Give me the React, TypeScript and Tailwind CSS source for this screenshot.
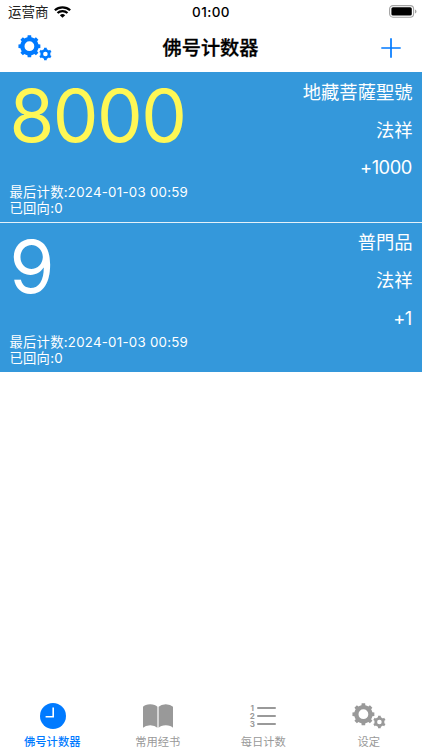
import React from "react";

const point = (cx: number, cy: number, r: number, deg: number) => {
  const a = (deg * Math.PI) / 180;
  return `${(cx + r * Math.sin(a)).toFixed(2)} ${(cy - r * Math.cos(a)).toFixed(2)}`;
};

function gearPath(cx: number, cy: number, outer: number, body: number, hole: number, teeth: number) {
  const step = 360 / teeth;
  const pts: string[] = [];
  for (let i = 0; i < teeth; i++) {
    const a = i * step;
    pts.push(point(cx, cy, body, a - step * 0.27));
    pts.push(point(cx, cy, outer, a - step * 0.2));
    pts.push(point(cx, cy, outer, a + step * 0.2));
    pts.push(point(cx, cy, body, a + step * 0.27));
    pts.push(point(cx, cy, body, a + step * 0.5));
  }
  return `M${pts.join("L")}ZM${cx - hole} ${cy}a${hole} ${hole} 0 1 0 ${hole * 2} 0a${hole} ${hole} 0 1 0 ${-hole * 2} 0Z`;
}

function Gears() {
  return (
    <svg width="34" height="26" viewBox="0 0 34 26" fill="currentColor" fillRule="evenodd">
      <path d={gearPath(11.4, 11.2, 11.1, 9.2, 4.9, 8)} />
      <path d={gearPath(27.4, 19, 6.4, 5, 2.3, 6)} />
    </svg>
  );
}

function Wifi() {
  return (
    <svg width="17" height="12" viewBox="0 0 16 12" fill="none" stroke="#000" strokeWidth="2.1" preserveAspectRatio="none">
      <path d="M.8 4.3a10.3 10.3 0 0 1 14.4 0" />
      <path d="M3.3 7a6.8 6.8 0 0 1 9.4 0" />
      <path d="M5.5 9.2a3.6 3.6 0 0 1 5 0L8 11.8Z" fill="#000" stroke="none" />
    </svg>
  );
}

function Battery() {
  return (
    <svg width="28" height="13" viewBox="0 0 28 13">
      <rect x=".6" y=".6" width="24" height="11.6" rx="3.4" fill="none" stroke="#a3a3a3" strokeWidth="1.1" />
      <rect x="2.4" y="2.2" width="20.4" height="8.4" rx="1.6" fill="#000" />
      <path d="M26 4.4c2 .7 2 3.3 0 4Z" fill="#a3a3a3" />
    </svg>
  );
}

function Clock() {
  return (
    <svg className="ml-[1px]" width="26" height="26" viewBox="0 0 26 26">
      <circle cx="13" cy="13" r="13" fill="currentColor" />
      <path d="M13.2 4.5v9.2H5.6" fill="none" stroke="#fff" strokeWidth="1.6" />
    </svg>
  );
}

function Book() {
  return (
    <svg width="30" height="24" viewBox="0 0 30 24" fill="currentColor">
      <path d="M0 2.8Q2 .3 7.2.3T14.4 2.8V23.8Q12 21.3 7.2 21.3T0 23.8Z" />
      <path d="M15.6 2.8Q18 .3 22.8.3T30 2.8V23.8Q28 21.3 22.8 21.3T15.6 23.8Z" />
    </svg>
  );
}

function NumberedList() {
  return (
    <div className="flex flex-col pr-[1px]">
      {["1", "2", "3"].map((n) => (
        <div key={n} className="flex h-[8px] items-center gap-[2px]">
          <span className="w-[6px] text-center text-[8px] leading-[8px] font-bold">{n}</span>
          <i className="h-[2px] w-[19px] rounded-full bg-current" />
        </div>
      ))}
    </div>
  );
}

interface Counter {
  count: string;
  countClass: string;
  name: string;
  owner: string;
  step: string;
}

const counters: Counter[] = [
  { count: "8000", countClass: "text-[#fff755]", name: "地藏菩薩聖號", owner: "法祥", step: "+1000" },
  { count: "9", countClass: "text-white", name: "普門品", owner: "法祥", step: "+1" },
];

function CounterCard({ item }: { item: Counter }) {
  return (
    <section className="flex h-[149.5px] justify-between bg-[#3498db] pr-[9.5px] pl-[9.5px] text-white">
      <div className="flex flex-col">
        <div className={`h-[88px] text-[72.5px] leading-[88px] tracking-[-1.5px] ${item.countClass}`}>
          {item.count}
        </div>
        <div className="mt-[23.7px] text-[13.3px] leading-[16px] tracking-[0.25px]">
          <div>最后计数:2024-01-03 00:59</div>
          <div>已回向:0</div>
        </div>
      </div>
      <div className="flex flex-col gap-[13.8px] pt-[7.9px] text-right text-[18.3px] leading-[24px]">
        <div>{item.name}</div>
        <div>{item.owner}</div>
        <div className="pr-[0.8px] tracking-[-0.5px]">{item.step}</div>
      </div>
    </section>
  );
}

const tabs = [
  { label: "佛号计数器", icon: <Clock />, active: true },
  { label: "常用经书", icon: <Book />, active: false },
  { label: "每日计数", icon: <NumberedList />, active: false },
  { label: "设定", icon: <Gears />, active: false },
];

export default function App() {
  return (
    <div className="flex h-[750px] w-[422px] flex-col overflow-hidden bg-white font-[Inter,'Noto_Sans_CJK_SC',sans-serif]">
      <header className="h-[72px] shrink-0">
        <div className="grid h-[24px] grid-cols-3 items-center">
          <div className="flex items-center gap-[5px] pl-[8px] text-[13.5px] leading-[24px] text-[#222]">
            运营商
            <Wifi />
          </div>
          <div className="text-center text-[13.5px] leading-[24px] font-medium tracking-[0.4px]">01:00</div>
          <div className="flex justify-end pr-[5px] pb-[2px]">
            <Battery />
          </div>
        </div>
        <div className="grid h-[48px] grid-cols-3 items-center">
          <div className="flex pl-[18px] pb-[1px] text-[#007aff]">
            <Gears />
          </div>
          <h1 className="pr-[1px] text-center text-[19.2px] leading-[48px] font-medium [-webkit-text-stroke:0.3px_#000]">佛号计数器</h1>
          <div className="flex justify-end pr-[21px]">
            <svg width="20" height="20" viewBox="0 0 20 20" stroke="#007aff" strokeWidth="1.7">
              <path d="M10 .3v19.4M.3 10h19.4" />
            </svg>
          </div>
        </div>
      </header>
      <main className="flex flex-1 flex-col">
        <CounterCard item={counters[0]} />
        <div className="h-[1px] shrink-0 bg-[#e4f1fa]" />
        <CounterCard item={counters[1]} />
      </main>
      <nav className="grid h-[54px] shrink-0 grid-cols-4">
        {tabs.map((tab) => (
          <div key={tab.label} className={`pr-[1px] ${tab.active ? "text-[#007aff]" : "text-[#999]"}`}>
            <div className="flex h-[39px] items-center justify-center">{tab.icon}</div>
            <div className={`text-center text-[11.3px] leading-[14px] ${tab.active ? "font-medium" : ""}`}>
              {tab.label}
            </div>
          </div>
        ))}
      </nav>
    </div>
  );
}
